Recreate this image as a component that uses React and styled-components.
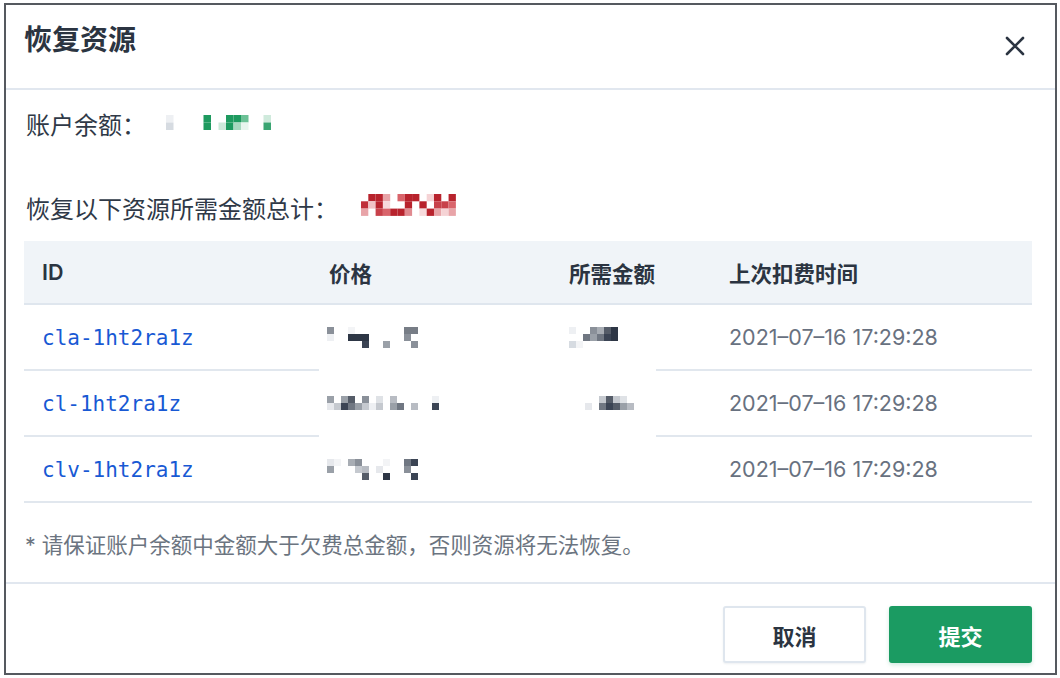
import React from "react";
import styled, { createGlobalStyle } from "styled-components";

const GlobalStyle = createGlobalStyle`
  html, body { margin: 0; padding: 0; background: #ffffff; }
  body {
    font-family: Inter, "Noto Sans CJK SC", "Noto Sans", sans-serif;
    color: #2b3441;
  }
  * { box-sizing: border-box; }
`;

const Page = styled.div`
  padding: 3px 3px 3px 4px;
  width: 1060px;
  height: 678px;
`;

const Frame = styled.div`
  width: 1053px;
  height: 672px;
  border: 2px solid #55595f;
  display: flex;
  flex-direction: column;
  background: #fff;
  overflow: hidden;
`;

const Header = styled.div`
  height: 85px;
  flex: none;
  display: flex;
  align-items: center;
  justify-content: space-between;
  padding: 0 28px 0 18px;
  border-bottom: 2px solid #e1e7ef;
`;

const Title = styled.h1`
  margin: 0;
  margin-top: -18px;
  font-size: 28px;
  font-weight: 600;
  color: #2b3441;
`;

const CloseButton = styled.button`
  border: 0;
  background: none;
  padding: 0;
  width: 24px;
  height: 24px;
  display: flex;
  align-items: center;
  justify-content: center;
  margin-top: -2px;
  cursor: pointer;
`;

const Body = styled.div`
  flex: 1;
  display: flex;
  flex-direction: column;
  padding: 0 23px 0 18px;
`;

const InfoLine = styled.div`
  display: flex;
  align-items: center;
  font-size: 24px;
  color: #2f3947;
  height: 36px;
  margin-top: ${(p) => p.$mt}px;
  & > span { margin-left: 2px; }
`;

const Mask = styled.svg`
  display: block;
  flex: none;
  margin-left: ${(p) => p.$ml || 0}px;
  margin-top: ${(p) => p.$mt || 0}px;
`;

const Table = styled.table`
  width: 100%;
  border-collapse: separate;
  border-spacing: 0;
  margin-top: 16px;
  table-layout: fixed;
`;

const HeadCell = styled.th`
  height: 64px;
  background: #f0f4f8;
  text-align: left;
  font-size: 21.5px;
  font-weight: 600;
  color: #2b3441;
  padding: 0 0 0 18px;
  border-bottom: 2px solid #dfe6ee;
  width: ${(p) => p.$w || "auto"};
`;

const Cell = styled.td`
  position: relative;
  height: 66px;
  padding: 0 0 0 18px;
  vertical-align: middle;
  border-bottom: 2px solid #e1e7ee;
  font-size: 21.5px;
  color: #687180;

  ${(p) =>
    p.$patch &&
    `
    &::after {
      content: "";
      position: absolute;
      z-index: 1;
      left: 8px;
      bottom: -2px;
      width: 337px;
      height: 2px;
      background: #ffffff;
    }
  `}
`;

const IdLink = styled.a`
  font-family: "DejaVu Sans Mono", "Liberation Mono", monospace;
  font-size: 21px;
  color: #1859d4;
  text-decoration: none;
`;

const Note = styled.p`
  margin: 22px 0 0 1px;
  font-size: 21.5px;
  color: #6b7480;
  height: 40px;
  line-height: 40px;
`;

const Footer = styled.div`
  flex: none;
  height: 91px;
  border-top: 2px solid #e1e7ef;
  display: flex;
  justify-content: flex-end;
  align-items: flex-start;
  gap: 23px;
  padding: 22px 23px 0 0;
`;

const Button = styled.button`
  width: 143px;
  height: 57px;
  border-radius: 3px;
  font-family: inherit;
  font-size: 22px;
  font-weight: 600;
  cursor: pointer;
  border: 2px solid ${(p) => (p.$primary ? "#1b9b62" : "#dfe6ee")};
  background: ${(p) => (p.$primary ? "#1b9b62" : "#ffffff")};
  color: ${(p) => (p.$primary ? "#ffffff" : "#2b3441")};
  box-shadow: ${(p) => (p.$primary ? "0 2px 4px rgba(27,155,98,0.2)" : "0 1px 2px rgba(40,60,90,0.08)")};
`;

/* pixelated (redacted) values: cells [col, row, color] */
function Pixels({ cells, size = 7, cols, rows, ml, mt }) {
  return (
    <Mask width={cols * size} height={rows * size} $ml={ml} $mt={mt} viewBox={`0 0 ${cols * size} ${rows * size}`}>
      {cells.map(([c, r, fill], i) => (
        <rect key={i} x={c * size} y={r * size} width={size} height={size} fill={fill} />
      ))}
    </Mask>
  );
}

const balanceCells = [
  [0, 0, "#eef0f3"], [0, 1, "#d6dbe1"],
  [5, 0, "#1e9a5f"], [5, 1, "#1e9a5f"],
  [7, 1, "#cde9da"], [8, 0, "#1e9a5f"], [8, 1, "#1e9a5f"], [9, 0, "#1e9a5f"], [9, 1, "#a8d8bf"],
  [10, 0, "#6cc196"], [10, 1, "#e8f5ee"], [13, 0, "#cfeadc"], [13, 1, "#3aa572"],
];

const totalCells = [
  [0, 1, "#c0303a"], [0, 2, "#e8a4a8"],
  [1, 0, "#b8232d"], [2, 0, "#b8232d"], [3, 0, "#e8a4a8"], [5, 0, "#d9646b"], [6, 0, "#b8232d"], [7, 0, "#b8232d"], [9, 0, "#f5d3d5"], [10, 0, "#b8232d"], [12, 0, "#b8232d"],
  [1, 1, "#f0c2c5"], [2, 1, "#b8232d"], [3, 1, "#f7dadc"], [6, 1, "#b8232d"], [8, 1, "#b8232d"], [10, 1, "#c8414a"], [11, 1, "#c8414a"], [12, 1, "#d9646b"],
  [2, 2, "#c8414a"], [3, 2, "#d9646b"], [4, 2, "#b8232d"], [5, 2, "#b8232d"], [6, 2, "#e08a90"], [8, 2, "#f7dadc"], [9, 2, "#b8232d"], [10, 2, "#e8a4a8"], [11, 2, "#f5d3d5"], [12, 2, "#e8a4a8"],
];

const price1 = [
  [0, 0, "#8a9099"], [0, 1, "#eef0f3"], [3, 0, "#f3f4f6"], [3, 1, "#2d3645"], [4, 1, "#2d3645"], [5, 1, "#2d3645"], [5, 2, "#3b4454"],
  [8, 2, "#9aa0a8"], [11, 0, "#777d86"], [12, 0, "#777d86"], [11, 1, "#8a9099"], [12, 2, "#8a9099"],
];
const price2 = [
  [0, 0, "#9aa0a8"], [0, 1, "#e6e8ec"], [1, 1, "#c5c9cf"], [2, 0, "#9aa0a8"], [2, 1, "#3b4454"], [3, 0, "#555c68"], [3, 1, "#707782"],
  [4, 1, "#9aa0a8"], [5, 0, "#8a9099"], [5, 1, "#c5c9cf"], [6, 1, "#eef0f3"], [7, 0, "#dfe2e6"], [7, 1, "#c5c9cf"],
  [9, 0, "#b8bcc3"], [9, 1, "#9aa0a8"], [10, 1, "#707782"], [12, 1, "#b8bcc3"], [15, 0, "#eef0f3"], [15, 1, "#3b4454"],
];
const price3 = [
  [0, 0, "#e6e8ec"], [0, 1, "#9aa0a8"], [1, 0, "#f3f4f6"], [3, 0, "#a8adb4"], [4, 0, "#8a9099"], [4, 1, "#c5c9cf"], [5, 1, "#b8bcc3"], [5, 2, "#555c68"],
  [7, 1, "#e6e8ec"], [8, 0, "#f3f4f6"], [8, 2, "#2d3645"], [11, 0, "#707782"], [11, 1, "#8a9099"], [12, 0, "#3b4454"], [12, 2, "#3b4454"],
];
const amount1 = [
  [0, 0, "#eef0f3"], [0, 2, "#d6dbe1"], [2, 1, "#707782"], [3, 0, "#8a9099"], [3, 1, "#9aa0a8"], [4, 0, "#a8adb4"], [4, 1, "#707782"],
  [5, 0, "#555c68"], [5, 1, "#3b4454"], [6, 0, "#2d3645"], [6, 1, "#2d3645"], [1, 2, "#f3f4f6"],
];
const amount2 = [
  [0, 1, "#e6e8ec"], [2, 0, "#c5c9cf"], [2, 1, "#707782"], [3, 0, "#555c68"], [3, 1, "#3b4454"], [4, 0, "#c5c9cf"], [4, 1, "#555c68"],
  [5, 0, "#dfe2e6"], [5, 1, "#9aa0a8"], [6, 1, "#b8bcc3"],
];

const rows = [
  { id: "cla-1ht2ra1z", price: [price1, 13, 3], amount: [amount1, 7, 3, 0] },
  { id: "cl-1ht2ra1z", price: [price2, 20, 2], amount: [amount2, 7, 2, 16] },
  { id: "clv-1ht2ra1z", price: [price3, 13, 3], amount: null },
];

export default function App() {
  return (
    <>
      <GlobalStyle />
      <Page>
        <Frame>
          <Header>
            <Title>恢复资源</Title>
            <CloseButton aria-label="关闭">
              <svg width="20" height="20" viewBox="0 0 20 20">
                <path d="M2 2 L18 18 M18 2 L2 18" stroke="#2b3441" strokeWidth="2.6" strokeLinecap="round" />
              </svg>
            </CloseButton>
          </Header>
          <Body>
            <InfoLine $mt={15}>
              <span>账户余额：</span>
              <Pixels cells={balanceCells} cols={15} rows={2} size={7.5} ml={20} mt={-2} />
            </InfoLine>
            <InfoLine $mt={48}>
              <span>恢复以下资源所需金额总计：</span>
              <Pixels cells={totalCells} cols={13} rows={3} size={7.3} ml={23} mt={-4} />
            </InfoLine>
            <Table>
              <thead>
                <tr>
                  <HeadCell $w="287px">ID</HeadCell>
                  <HeadCell $w="240px">价格</HeadCell>
                  <HeadCell $w="160px">所需金额</HeadCell>
                  <HeadCell>上次扣费时间</HeadCell>
                </tr>
              </thead>
              <tbody>
                {rows.map((r, i) => {
                  const masked = i < rows.length - 1;
                  return (
                    <tr key={r.id}>
                      <Cell>
                        <IdLink href="#">{r.id}</IdLink>
                      </Cell>
                      <Cell $patch={masked}>
                        <Pixels cells={r.price[0]} cols={r.price[1]} rows={r.price[2]} ml={-2} />
                      </Cell>
                      <Cell>
                        {r.amount && (
                          <Pixels cells={r.amount[0]} cols={r.amount[1]} rows={r.amount[2]} ml={r.amount[3]} />
                        )}
                      </Cell>
                      <Cell>2021–07–16 17:29:28</Cell>
                    </tr>
                  );
                })}
              </tbody>
            </Table>
            <Note>* 请保证账户余额中金额大于欠费总金额，否则资源将无法恢复。</Note>
          </Body>
          <Footer>
            <Button>取消</Button>
            <Button $primary>提交</Button>
          </Footer>
        </Frame>
      </Page>
    </>
  );
}
